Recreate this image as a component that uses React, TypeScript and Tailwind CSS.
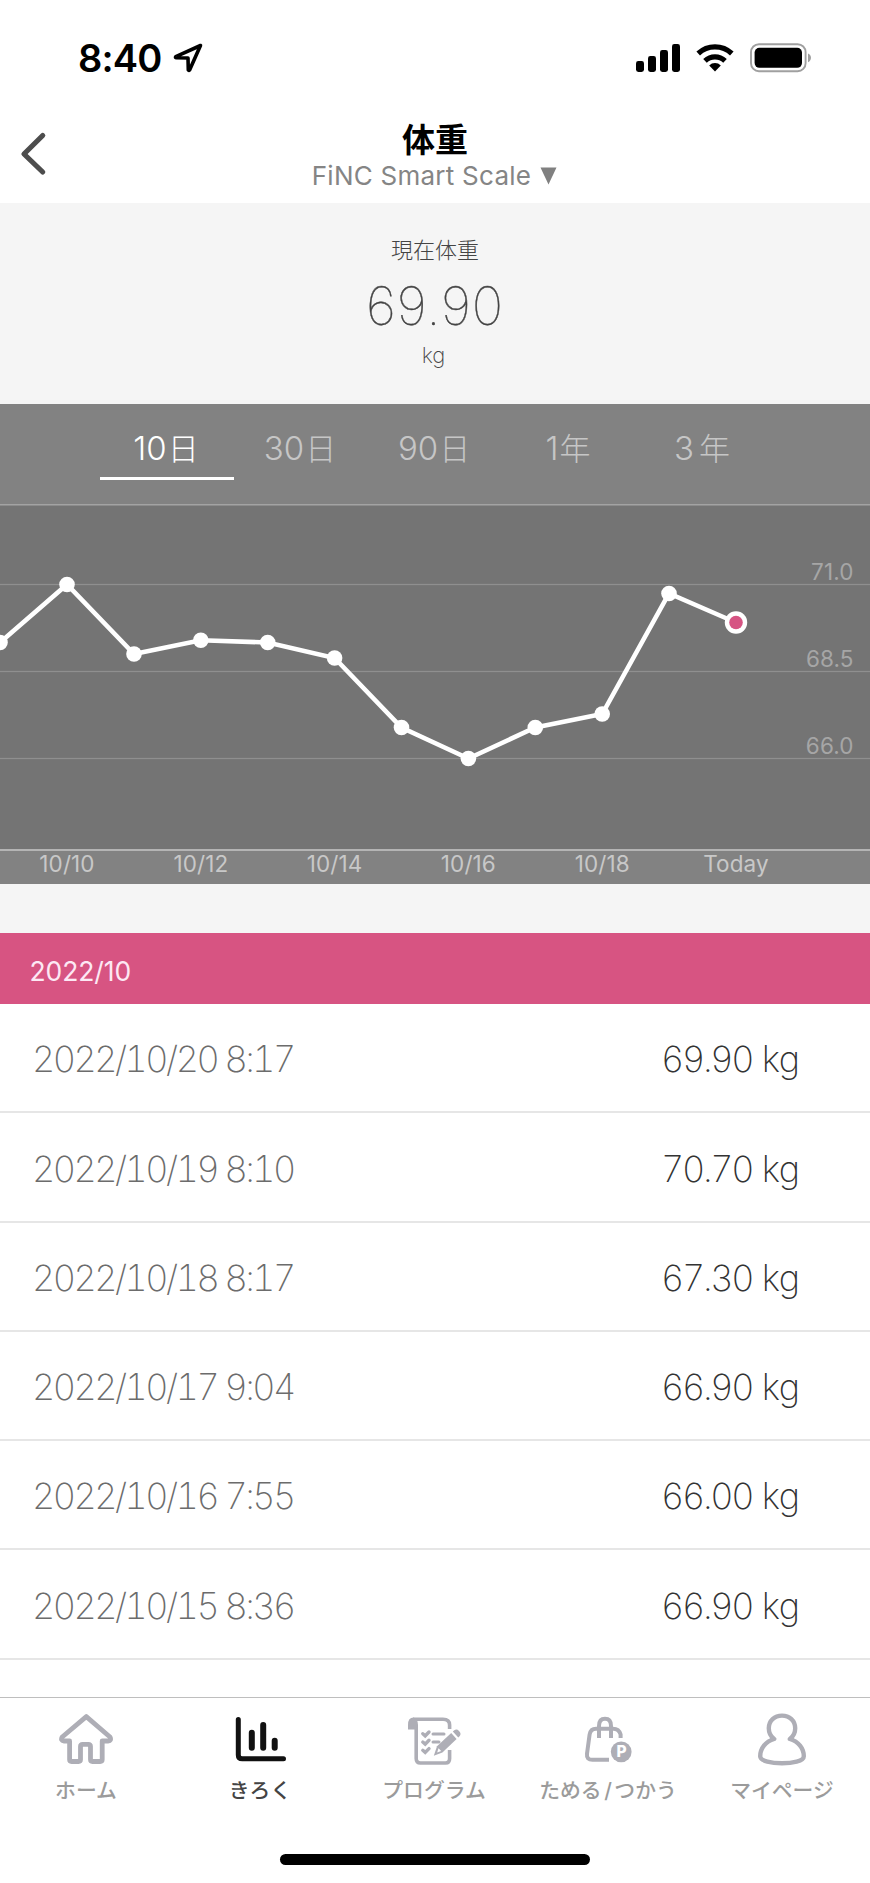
import React, { useState } from 'react'

const PERIODS = [
  { value: '10', unit: '日' },
  { value: '30', unit: '日' },
  { value: '90', unit: '日' },
  { value: '1', unit: '年' },
  { value: '3', unit: '年', wide: true },
]

const RECORDS = [
  { date: '2022/10/20', time: '8:17', weight: '69.90' },
  { date: '2022/10/19', time: '8:10', weight: '70.70' },
  { date: '2022/10/18', time: '8:17', weight: '67.30' },
  { date: '2022/10/17', time: '9:04', weight: '66.90' },
  { date: '2022/10/16', time: '7:55', weight: '66.00' },
  { date: '2022/10/15', time: '8:36', weight: '66.90' },
]

// chart points, in px from the top left of the plot
const POINTS = [
  [0, 138.5],
  [67, 80.5],
  [134, 150],
  [200.8, 136.3],
  [267.7, 138.5],
  [334.6, 154],
  [401.5, 223.5],
  [468.4, 254.5],
  [535.3, 223.5],
  [602.2, 210],
  [669, 89.5],
  [736, 118.5],
]

const Y_LABELS = [
  { label: '71.0', y: 80.5 },
  { label: '68.5', y: 167.5 },
  { label: '66.0', y: 254.5 },
]

const X_LABELS = [
  { label: '10/10', x: 67 },
  { label: '10/12', x: 200.8 },
  { label: '10/14', x: 334.6 },
  { label: '10/16', x: 468.4 },
  { label: '10/18', x: 602.2 },
  { label: 'Today', x: 736 },
]

const StatusBar = () => (
  <div className="flex h-[116px] items-center justify-between pl-[78px] pr-[59px]">
    <div className="flex items-center gap-[11px]">
      <span className="text-[38px] font-semibold leading-[46px] tracking-[-0.8px]">8:40</span>
      <svg width="30" height="30" viewBox="0 0 30 30" fill="none">
        <path d="M27.5 2.5 L2.8 13.6 Q2 14.6 3.2 14.8 L15 15 L15.3 27 Q15.8 28 16.6 27 Z" stroke="black" strokeWidth="3.6" strokeLinejoin="round" />
      </svg>
    </div>
    <svg width="175" height="30" viewBox="636 43 175 30">
      <rect x="636" y="61" width="8" height="11" rx="2.4" />
      <rect x="648" y="56" width="8" height="16" rx="2.4" />
      <rect x="660" y="50" width="8" height="22" rx="2.4" />
      <rect x="672" y="44" width="8" height="28" rx="2.4" />
      <path d="M698.2 53.5 A24.5 24.5 0 0 1 731.8 53.5" fill="none" stroke="black" strokeWidth="5.2" />
      <path d="M705 60.8 A14.6 14.6 0 0 1 725 60.8" fill="none" stroke="black" strokeWidth="5.2" />
      <path d="M715 71.5 L709.2 65.4 A8.4 8.4 0 0 1 720.8 65.4 Z" />
      <rect x="751" y="44.2" width="54.6" height="27" rx="8" fill="none" stroke="#a0a0a0" strokeWidth="1.9" />
      <rect x="754.6" y="47.8" width="47.4" height="20" rx="4.8" />
      <path d="M808 53.4 C812 55 812 60.6 808 62.2 Z" fill="#a0a0a0" />
    </svg>
  </div>
)

const Header = () => (
  <header className="flex h-[87px] items-start">
    <button className="flex w-[120px] pl-[20px] pt-[14px]">
      <svg width="28" height="46" viewBox="0 0 28 46" fill="none">
        <path d="M22.7 5.5 L4 24 L22.7 42" stroke="#4d4d4d" strokeWidth="5.2" strokeLinecap="round" strokeLinejoin="round" />
      </svg>
    </button>
    <div className="flex flex-1 flex-col items-center pt-[3px]">
      <h1 className="text-[33px] font-bold leading-[42px]">体重</h1>
      <div className="-mt-px flex items-center pr-px text-[26px] leading-[32px] text-[#858585]">
        <span className="tracking-[0.25px]">FiNC Smart Scale</span>
        <svg className="ml-[9px]" width="17" height="18" viewBox="0 0 17 18">
          <path d="M0.5 0.5 H16.5 L8.5 17.5 Z" fill="#808080" />
        </svg>
      </div>
    </div>
    <div className="w-[120px]" />
  </header>
)

const Chart = () => {
  const last = POINTS[POINTS.length - 1]
  return (
    <svg className="block" width="870" height="379.5" viewBox="0 0 870 379.5">
      <rect width="870" height="379.5" fill="#828282" />
      <rect width="870" height="346" fill="#747474" />
      <rect width="870" height="1.5" fill="#a3a3a3" />
      {Y_LABELS.map((item) => (
        <g key={item.label}>
          <rect y={item.y - 0.6} width="870" height="1.2" fill="#8f8f8f" />
          <text x="853.5" y={item.y - 5} textAnchor="end" fontSize="22.5" letterSpacing="0.1" fill="#a6a6a6">{item.label}</text>
        </g>
      ))}
      <rect y="345" width="870" height="2" fill="#b4b4b4" />
      {X_LABELS.map((item) => (
        <text key={item.label} x={item.x} y="368" textAnchor="middle" fontSize="22.5" letterSpacing="0.1" fill="#c8c8c8">{item.label}</text>
      ))}
      <polyline points={POINTS.map((p) => p.join(',')).join(' ')} fill="none" stroke="white" strokeWidth="4.6" />
      {POINTS.map(([x, y]) => (
        <circle key={x} cx={x} cy={y} r="7.8" fill="white" />
      ))}
      <circle cx={last[0]} cy={last[1]} r="11.2" fill="white" />
      <circle cx={last[0]} cy={last[1]} r="6.8" fill="#d65483" />
    </svg>
  )
}

const HomeIcon = () => (
  <svg width="56" height="56" viewBox="0 0 56 56" fill="none">
    <path d="M27.3 5.6 L3.2 26 Q1.2 29.7 5 30 H10.6 V48.5 Q10.6 50.5 12.6 50.5 H19.5 Q21.5 50.5 21.5 48.5 V35.5 Q21.5 33.3 23.7 33.3 H29.3 Q31.5 33.3 31.5 35.5 V48.5 Q31.5 50.5 33.5 50.5 H41.2 Q43.2 50.5 43.2 48.5 V30 H49 Q52.8 29.7 51 26 Z" stroke="#aeaeb6" strokeWidth="4.8" strokeLinejoin="round" />
  </svg>
)

const RecordIcon = () => (
  <svg width="56" height="56" viewBox="0 0 56 56" fill="none" stroke="#111" strokeLinecap="round">
    <path d="M5.3 8.5 V44 Q5.3 47.8 9.3 47.8 H50.5" strokeWidth="5" />
    <path d="M18.8 21.8 V36.8 M30.2 14 V36.8 M41.7 29.8 V36.8" strokeWidth="6" />
  </svg>
)

const ProgramIcon = () => (
  <svg width="56" height="56" viewBox="0 0 56 56" fill="none" stroke="#aeaeb6">
    <path d="M6 8.2 H36 Q42.6 8.2 42.6 14 V18" strokeWidth="3.6" />
    <path d="M42.6 39 V47.5 Q42.6 52 38.5 52 H13.5 Q9.2 52 9.2 47.5 V18" strokeWidth="3.6" />
    <path d="M1 18.5 V14 Q1 6.6 6.5 6.6 Q11 8 11 14 V18.5 Z" fill="#aeaeb6" stroke="none" />
    <path d="M15.8 22.7 L18.2 24.8 L22 21 M15.8 31 L18.2 33.1 L22 29.3 M15.8 39.3 L18.2 41.4 L22 37.6" strokeWidth="3.4" strokeLinecap="round" />
    <path d="M26 23 H37 M26 31 H32" strokeWidth="3" strokeLinecap="round" />
    <path d="M26.8 44.8 L30 35.2 L44.2 22 L49.6 28 L35.4 41.4 Z" fill="#aeaeb6" stroke="none" />
    <path d="M45.8 20.6 L47.3 19.2 Q49.8 17.5 52 19.9 Q54.6 22.5 52.8 24.9 L51.3 26.5 Z" fill="#aeaeb6" stroke="none" />
    <path d="M30.2 41.5 L31.5 37.2 L34.2 40 Z" fill="white" stroke="none" />
  </svg>
)

const PointIcon = () => (
  <svg width="56" height="56" viewBox="0 0 56 56" fill="none" stroke="#aeaeb6">
    <path d="M28 48.8 H11.5 Q5.3 48.8 6 42.8 L8.6 23.5 Q9.6 17.7 15 17.7 H32 Q38 17.7 39.6 23.5 V27" strokeWidth="4" />
    <path d="M18 27 V15 Q18 7.7 24 7.7 Q30 7.7 30 15 V27" strokeWidth="4" />
    <circle cx="40.2" cy="40.8" r="10.4" fill="#aeaeb6" stroke="none" />
    <text x="40.6" y="46.4" textAnchor="middle" fontSize="15.5" fontWeight="800" fill="white" stroke="none">P</text>
  </svg>
)

const MyPageIcon = () => (
  <svg width="56" height="56" viewBox="0 0 56 56" fill="none">
    <path d="M19.2 28 C10.5 30.5 5.2 37.5 5.2 45.2 C5.2 50.3 17 52.2 27 52.2 C37 52.2 48.8 50.3 48.8 45.2 C48.8 37.5 43.5 30.5 34.8 28 C38.5 25.5 40.2 21.8 40.2 17.3 C40.2 9.8 34.5 4.6 27 4.6 C19.5 4.6 13.8 9.8 13.8 17.3 C13.8 21.8 15.5 25.5 19.2 28 Z" stroke="#aeaeb6" strokeWidth="4.4" strokeLinejoin="round" />
  </svg>
)

const NAV = [
  { label: 'ホーム', icon: HomeIcon },
  { label: 'きろく', icon: RecordIcon, active: true },
  { label: 'プログラム', icon: ProgramIcon },
  { label: 'ためる/つかう', icon: PointIcon },
  { label: 'マイページ', icon: MyPageIcon },
]

const App = () => {
  const [period, setPeriod] = useState('10')

  return (
    <div lang="ja" className="flex h-[1883px] w-[870px] flex-col overflow-hidden bg-white font-['Inter','Noto_Sans_CJK_JP',sans-serif] text-black">
      <StatusBar />
      <Header />

      <section className="flex h-[201px] flex-col items-center bg-[#f5f5f5] pt-[31px] text-[#444]">
        <p className="text-[22px] font-light leading-8">現在体重</p>
        <p className="mt-[8px] text-[53px] font-thin leading-[64px] tracking-[0.9px] [-webkit-text-stroke:0.4px_#444]">69.90</p>
        <p className="mt-px pr-[3px] text-[22px] font-extralight leading-8">kg</p>
      </section>

      <section className="bg-[#828282]">
        <div className="flex h-[100px] px-[100px]">
          {PERIODS.map((item) => (
            <button
              key={item.value}
              onClick={() => setPeriod(item.value)}
              className={`h-[76px] w-[134px] border-b-[3px] pb-[2px] pr-[2px] pt-[18px] text-[33px] font-light leading-[42px] ${item.value === period ? 'border-white text-white' : 'border-transparent text-[#c6c6c6]'}`}
            >
              {item.value}
              <span className={`text-[31px] ${item.wide ? 'ml-[5px]' : 'ml-px'}`}>{item.unit}</span>
            </button>
          ))}
        </div>
        <Chart />
      </section>

      <section className="flex min-h-0 flex-1 flex-col overflow-hidden">
        <div className="h-[49px] shrink-0 bg-[#f5f5f5]" />
        <h2 className="flex h-[71.5px] shrink-0 items-center bg-[#d75482] pl-[29.5px] pt-[7px] text-[26.5px] tracking-[-0.1px] text-[#fde8f4]">2022/10</h2>
        <ul>
          {RECORDS.map((item) => (
            <li key={item.date} className="flex h-[109.25px] items-center justify-between border-b-2 border-[#e6e6e6] pl-[32px] pr-[70.5px] pt-[3.5px] text-[36px] font-extralight tabular-nums">
              <span className="tracking-[-2.5px] text-[#6c6c6c]">{item.date} {item.time}</span>
              <span className="text-[#333]">
                <span className="tracking-[-2.3px]">{item.weight}</span>
                <span className="ml-[9.5px] tracking-[-0.5px]">kg</span>
              </span>
            </li>
          ))}
        </ul>
      </section>

      <nav className="flex h-[157px] shrink-0 border-t border-[#bebebe] pt-[13px]">
        {NAV.map((item) => {
          const Icon = item.icon
          const parts = item.label.split('/')
          return (
            <a key={item.label} className="flex w-[174px] flex-col items-center pr-[2px]">
              <div className="pl-[2px]">
                <Icon />
              </div>
              <span className={`mt-[8px] whitespace-nowrap text-[20.8px] font-medium leading-8 ${item.active ? 'text-[#444]' : 'text-[#9b9b9b]'}`}>
                {parts[0]}
                {parts[1] && <span className="mx-[2.5px]">/</span>}
                {parts[1]}
              </span>
            </a>
          )
        })}
      </nav>
      <div className="flex h-[29px] shrink-0 justify-center">
        <div className="h-[11px] w-[310px] rounded-full bg-black" />
      </div>
    </div>
  )
}

export default App
